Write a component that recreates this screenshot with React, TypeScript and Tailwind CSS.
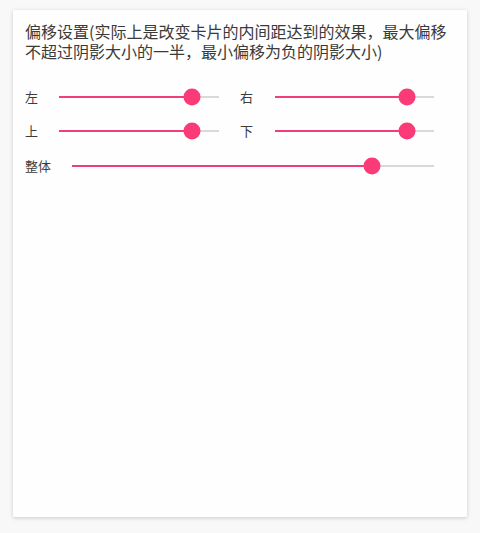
import React from "react";

function Slider({ label, labelW, value }: { label: string; labelW: string; value: number }) {
  return (
    <div className="flex items-center h-[20px] pr-[21px] flex-1">
      <span className={`${labelW} shrink-0 text-[13px] leading-[20px] text-[#3c3c3c]`}>{label}</span>
      <div className="relative flex-1 h-[2px] bg-[#d9d9d9]">
        <div className="absolute left-0 top-0 h-[2px] bg-[#f03e7c]" style={{ width: `${value}%` }} />
        <div
          className="absolute top-1/2 w-[17px] h-[17px] -translate-x-1/2 -translate-y-1/2 rounded-full bg-[#fb3a78]"
          style={{ left: `${value}%` }}
        />
      </div>
    </div>
  );
}

export default function App() {
  return (
    <div
      className="w-[480px] h-[533px] bg-[#f7f8f7] pt-[10px] pl-[13px]"
      style={{ fontFamily: '"Noto Sans CJK SC", "Noto Sans", sans-serif' }}
    >
      <div className="w-[454px] h-[507px] bg-[#fdfefd] shadow-[0_1px_4px_rgba(0,0,0,0.18)] pl-[12px] pr-[12px] pt-[11px]">
        <p className="text-[16px] leading-[20px] text-[#3a3a3a]">
          偏移设置(实际上是改变卡片的内间距达到的效果，最大偏移不超过阴影大小的一半，最小偏移为负的阴影大小)
        </p>
        <div className="mt-[26px] flex flex-col gap-[14px]">
          <div className="flex">
            <Slider label="左" labelW="w-[34px]" value={83} />
            <Slider label="右" labelW="w-[35px]" value={83} />
          </div>
          <div className="flex">
            <Slider label="上" labelW="w-[34px]" value={83} />
            <Slider label="下" labelW="w-[35px]" value={83} />
          </div>
          <div className="flex mt-[1px]">
            <Slider label="整体" labelW="w-[47px]" value={83} />
          </div>
        </div>
      </div>
    </div>
  );
}
